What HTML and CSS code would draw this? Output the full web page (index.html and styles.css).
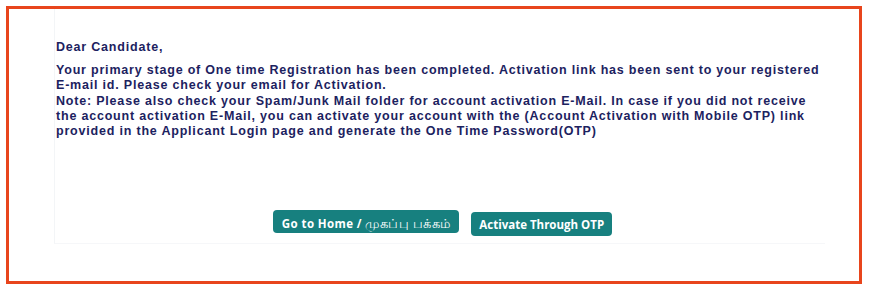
FILE: index.html
```html
<!DOCTYPE html>
<html lang="en">
<head>
    <meta charset="UTF-8">
    <meta name="viewport" content="width=device-width, initial-scale=1.0">
    <title>Registration Completed</title>
    <link rel="stylesheet" href="styles.css">
</head>
<body>
    <div class="frame">
        <div class="message-box">
            <p class="greeting">Dear Candidate,</p>
            <p class="message">
                Your primary stage of One time Registration has been completed. Activation link has been sent to your registered E-mail id. Please check your email for Activation.<br>
                Note: Please also check your Spam/Junk Mail folder for account activation E-Mail. In case if you did not receive the account activation E-Mail, you can activate your account with the (Account Activation with Mobile OTP) link provided in the Applicant Login page and generate the One Time Password(OTP)
            </p>
            <div class="actions">
                <button class="btn btn-home">Go to Home / <span class="ta">முகப்பு பக்கம்</span></button>
                <button class="btn btn-otp">Activate Through OTP</button>
            </div>
        </div>
    </div>
</body>
</html>
```

FILE: styles.css
```css
body { margin: 0; background: #fff; font-family: "Liberation Sans", Arial, sans-serif; }
.frame { margin: 6px 7px 7px 6px; height: 272px; border: 3px solid #e8451c; }
.message-box { margin: 0 34px 0 45px; padding: 31px 0 0 1px; height: 203px; border-left: 1px solid #f3f5f7; border-bottom: 1px solid #f6f7f9; color: #1c2260; }
.greeting { margin: 0 0 8px; font-size: 12.5px; font-weight: bold; letter-spacing: 0.8px; line-height: 15px; }
.message { margin: 0; font-size: 12.5px; font-weight: bold; letter-spacing: 0.8px; line-height: 15.3px; }
.actions { display: flex; justify-content: center; align-items: flex-start; gap: 12px; margin-top: 71px; padding-left: 4px; }
.btn { border: none; border-radius: 4px; background: #17807f; color: #fff; font-family: "Open Sans", sans-serif; font-weight: bold; font-size: 11.5px; letter-spacing: 0.4px; cursor: pointer; }
.ta { font-size: 13px; font-weight: normal; }
.btn-home { padding: 4px 9px; height: 23px; }
.btn-otp { margin-top: 2px; padding: 4px 8px; height: 24px; letter-spacing: 0; }
```
